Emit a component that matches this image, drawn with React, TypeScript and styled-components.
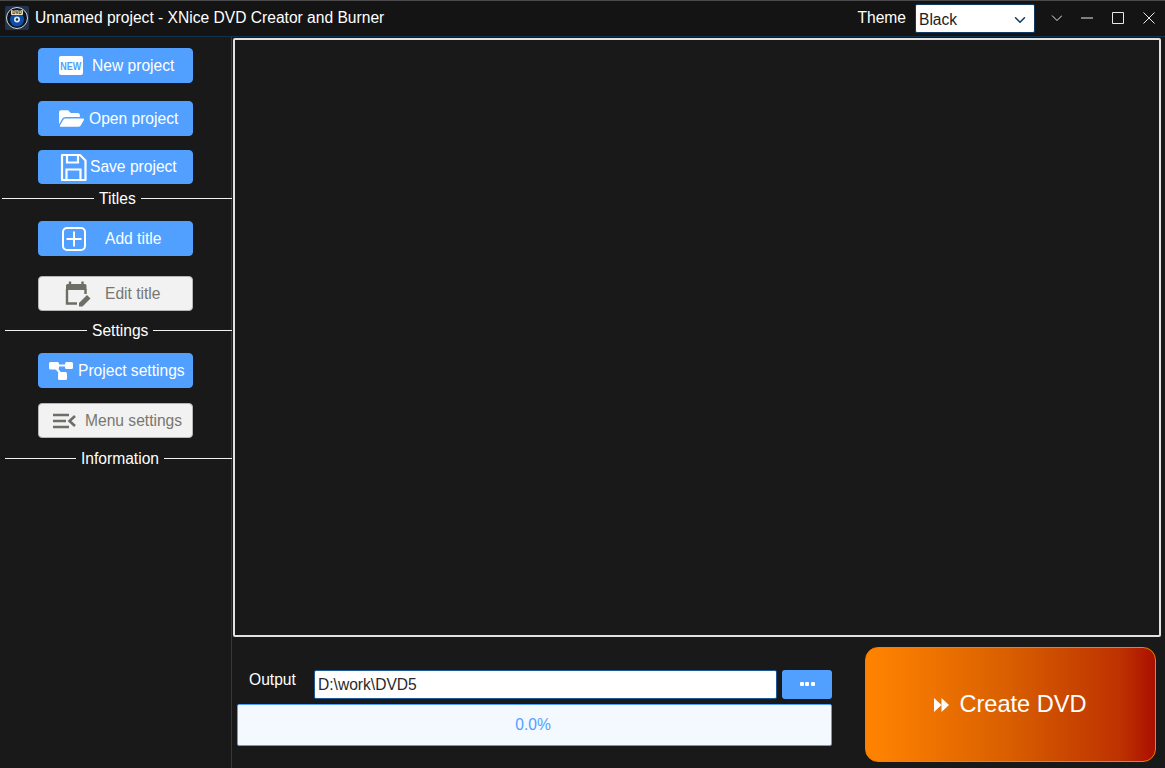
import * as React from 'react';
import styled, { createGlobalStyle } from 'styled-components';
import { ChevronDown } from 'lucide-react';
import { FaFolderOpen } from 'react-icons/fa';

const GlobalStyle = createGlobalStyle`
  html, body {
    margin: 0;
    padding: 0;
    background: #191919;
    font-family: "Liberation Sans", Arial, sans-serif;
  }
`;

const Window = styled.div`
  width: 1165px;
  height: 768px;
  display: flex;
  flex-direction: column;
  overflow: hidden;
  background: #191919;
  color: #fff;
  font-size: 15.6px;
`;

const TitleBar = styled.div`
  height: 37px;
  flex: none;
  box-sizing: border-box;
  display: flex;
  align-items: center;
  padding: 0 0 1px 5px;
  background: #141414;
  border-top: 1px solid #4a4a4a;
  border-bottom: 1px solid #12324c;
`;

const AppName = styled.span`
  margin-left: 6px;
  flex: 1;
`;

const ThemeLabel = styled.span`
  margin-right: 9px;
`;

const ThemeSelect = styled.div`
  width: 120px;
  height: 29px;
  margin-top: 1px;
  box-sizing: border-box;
  display: flex;
  align-items: center;
  justify-content: space-between;
  padding: 2px 5px 0 3px;
  background: #fff;
  color: #1d1d1d;
  border: 1px solid #0d3a63;
  border-radius: 2px;
`;

const WindowButtons = styled.div`
  display: flex;
  align-items: center;
  gap: 19px;
  margin-left: 15px;
  margin-right: 10px;
`;

const Body = styled.div`
  flex: 1;
  display: flex;
  min-height: 0;
`;

const Sidebar = styled.aside`
  width: 232px;
  flex: none;
  box-sizing: border-box;
  border-right: 1px solid #2e3a44;
  display: flex;
  flex-direction: column;
`;

const ActionButton = styled.div<{ $top: number; $left: number; $gap: number; $height?: number; $off?: boolean }>`
  width: 155px;
  height: ${(p) => p.$height ?? 35}px;
  flex: none;
  box-sizing: border-box;
  margin: ${(p) => p.$top}px 0 0 38px;
  padding-left: ${(p) => p.$left}px;
  display: flex;
  align-items: center;
  gap: ${(p) => p.$gap}px;
  border-radius: 4px;
  background: ${(p) => (p.$off ? '#f2f2f2' : '#519fff')};
  color: ${(p) => (p.$off ? '#77776f' : '#fff')};
  border: 1px solid ${(p) => (p.$off ? '#b5b5b5' : '#519fff')};
`;

const NewBadge = styled.span`
  width: 24px;
  height: 19px;
  border-radius: 2px;
  background: #fff;
  color: #519fff;
  display: flex;
  align-items: center;
  justify-content: center;
`;

const NewLabel = styled.span`
  font-size: 11px;
  font-weight: 700;
  transform: scaleX(0.82);
`;

const Section = styled.div<{ $top: number; $inset: number }>`
  height: 18px;
  flex: none;
  margin: ${(p) => p.$top}px -1px 0 ${(p) => p.$inset}px;
  display: flex;
  align-items: center;
  gap: 5px;
  line-height: 18px;
`;

const SectionLabel = styled.span`
  padding-top: 2px;
`;

const SectionLine = styled.span<{ $width?: number }>`
  height: 1px;
  background: #f2f2f2;
  flex: ${(p) => (p.$width ? 'none' : 1)};
  width: ${(p) => (p.$width ? `${p.$width}px` : 'auto')};
`;

const Content = styled.main`
  flex: 1;
  min-width: 0;
  display: flex;
  flex-direction: column;
`;

const Preview = styled.div`
  height: 599px;
  flex: none;
  box-sizing: border-box;
  margin: 1px 4px 0 1px;
  border: 2px solid #e2e2e2;
  border-radius: 2px;
  background: #191919;
`;

const Footer = styled.div`
  flex: 1;
  display: flex;
  align-items: flex-start;
  padding: 10px 9px 0 5px;
`;

const OutputColumn = styled.div`
  width: 595px;
  flex: none;
  padding-top: 23px;
  display: flex;
  flex-direction: column;
  gap: 5px;
`;

const OutputRow = styled.div`
  height: 29px;
  display: flex;
  align-items: stretch;
`;

const OutputLabel = styled.span`
  width: 77px;
  flex: none;
  padding-left: 12px;
  box-sizing: border-box;
  line-height: 19px;
`;

const PathField = styled.div`
  flex: 1;
  box-sizing: border-box;
  display: flex;
  align-items: center;
  padding: 1px 0 0 3px;
  background: #fff;
  color: #2a2a2a;
  border: 1px solid #1c5a96;
  border-radius: 2px;
`;

const BrowseButton = styled.div`
  width: 50px;
  margin-left: 5px;
  padding-bottom: 2px;
  box-sizing: border-box;
  flex: none;
  border-radius: 3px;
  background: #519fff;
  display: flex;
  align-items: center;
  justify-content: center;
  gap: 1.5px;
`;

const Dot = styled.i`
  width: 4px;
  height: 4px;
  background: #fff;
  border-radius: 1px;
`;

const Progress = styled.div`
  height: 42px;
  box-sizing: border-box;
  display: flex;
  align-items: center;
  justify-content: center;
  padding-right: 3px;
  background: #f4f8ff;
  color: #519fff;
  border: 1px solid #519fff;
  border-radius: 2px;
`;

const CreateButton = styled.div`
  width: 291px;
  height: 115px;
  margin-left: 33px;
  flex: none;
  box-sizing: border-box;
  display: flex;
  align-items: center;
  justify-content: center;
  gap: 10px;
  font-size: 23.6px;
  border-radius: 13px;
  border: 1px solid #f57f00;
  background: linear-gradient(90deg, #ff8300 0%, #fd8100 5%, #d85e00 50%, #bd3200 88%, #ab0f00 100%);
`;

const DiscLogo = () => (
  <svg width="24" height="24" viewBox="0 0 24 24">
    <rect width="24" height="24" rx="2" fill="#24334a" />
    <circle cx="12" cy="12" r="10.500" fill="#0c1420" stroke="#cfd6de" strokeWidth="1" />
    <circle cx="12" cy="13.500" r="7" fill="#0d4fa8" />
    <circle cx="12" cy="13.500" r="3" fill="#dfe7f0" />
    <circle cx="12" cy="13.500" r="1.200" fill="#10233f" />
    <rect x="6" y="4" width="12" height="5" rx="1" fill="#e8e2c8" />
    <text x="12" y="8" textAnchor="middle" fontSize="4.500" fontWeight="700" fill="#1a1a1a" fontFamily="Liberation Sans, sans-serif">
      DVD
    </text>
  </svg>
);

const SaveIcon = () => (
  <svg width="27" height="29" viewBox="0 0 27 29" fill="none" stroke="#fff" strokeWidth="2.200">
    <path d="M2 2h18l5.500 5.500V27H2z" strokeLinejoin="round" />
    <path d="M7 2v7.500h11V2" />
    <path d="M6.500 27V16.500h14V27" />
  </svg>
);

const AddIcon = () => (
  <svg width="24" height="24" viewBox="0 0 24 24" fill="none" stroke="#fff" strokeWidth="2">
    <rect x="1" y="1" width="22" height="22" rx="4" />
    <path d="M4.500 12h15M12 4.500v15" />
  </svg>
);

const EditIcon = () => (
  <svg width="26" height="28" viewBox="0 0 26 28" fill="none">
    <path d="M1 8V5.500A1.500 1.500 0 0 1 2.500 4H20a1.500 1.500 0 0 1 1.500 1.500V10H1z" fill="#6e6e66" />
    <path d="M5 1.500v4M17.500 1.500v4" stroke="#6e6e66" strokeWidth="2.400" />
    <path d="M2 9v14.500h10M20.500 9v5" stroke="#6e6e66" strokeWidth="2.400" />
    <path d="M14 26.500v-3.500l8-8 3.500 3.500-8 8z" fill="#6e6e66" />
  </svg>
);

const TreeIcon = () => (
  <svg width="24" height="19" viewBox="0 0 24 19" fill="#fff">
    <rect x="0" y="1" width="10" height="7.500" rx="1.500" />
    <rect x="16" y="1" width="8" height="7" rx="1.500" />
    <rect x="9" y="11" width="9" height="8" rx="1.500" />
    <path d="M6 4.500h12M6 6l7 8" stroke="#fff" strokeWidth="2.200" />
  </svg>
);

const MenuIcon = () => (
  <svg width="23" height="16" viewBox="0 0 23 16" fill="none" stroke="#6e6e66" strokeWidth="2.600">
    <path d="M0 2h16M0 8h13M0 14h16" />
    <path d="M22 3l-5.500 5 5.500 5" />
  </svg>
);

const ForwardIcon = () => (
  <svg width="15" height="14" viewBox="0 0 15 14" fill="#fff">
    <path d="M0 0l7.500 7L0 14zM7.500 0L15 7l-7.500 7z" />
  </svg>
);

const WindowIcon = ({ d }: { d: string }) => (
  <svg width="12" height="12" viewBox="0 0 12 12" fill="none" stroke="#e8e8e8" strokeWidth="1">
    <path d={d} />
  </svg>
);

export default function App() {
  return (
    <Window>
      <GlobalStyle />
      <TitleBar>
        <DiscLogo />
        <AppName>Unnamed project - XNice DVD Creator and Burner</AppName>
        <ThemeLabel>Theme</ThemeLabel>
        <ThemeSelect>
          <span>Black</span>
          <ChevronDown size={18} color="#0d3a63" strokeWidth={2} />
        </ThemeSelect>
        <WindowButtons>
          <WindowIcon d="M2 3.500 7 8.500l5-5" />
          <WindowIcon d="M0 6h12" />
          <WindowIcon d="M.5 .5h11v11H.5z" />
          <WindowIcon d="M.5.500l11 11M11.500.500l-11 11" />
        </WindowButtons>
      </TitleBar>
      <Body>
        <Sidebar>
          <ActionButton $top={11} $left={20} $gap={9}>
            <NewBadge>
              <NewLabel>NEW</NewLabel>
            </NewBadge>
            New project
          </ActionButton>
          <ActionButton $top={18} $left={20} $gap={5}>
            <FaFolderOpen size={25} />
            Open project
          </ActionButton>
          <ActionButton $top={14} $left={21} $gap={3} $height={34}>
            <SaveIcon />
            Save project
          </ActionButton>
          <Section $top={5} $inset={2}>
            <SectionLine $width={92} />
            <SectionLabel>Titles</SectionLabel>
            <SectionLine />
          </Section>
          <ActionButton $top={14} $left={23} $gap={19}>
            <AddIcon />
            Add title
          </ActionButton>
          <ActionButton $top={20} $left={26} $gap={14} $off>
            <EditIcon />
            Edit title
          </ActionButton>
          <Section $top={10} $inset={5}>
            <SectionLine $width={82} />
            <SectionLabel>Settings</SectionLabel>
            <SectionLine />
          </Section>
          <ActionButton $top={14} $left={10} $gap={5}>
            <TreeIcon />
            Project settings
          </ActionButton>
          <ActionButton $top={15} $left={14} $gap={9} $off>
            <MenuIcon />
            Menu settings
          </ActionButton>
          <Section $top={11} $inset={5}>
            <SectionLine $width={71} />
            <SectionLabel>Information</SectionLabel>
            <SectionLine />
          </Section>
        </Sidebar>
        <Content>
          <Preview />
          <Footer>
            <OutputColumn>
              <OutputRow>
                <OutputLabel>Output</OutputLabel>
                <PathField>D:\work\DVD5</PathField>
                <BrowseButton>
                  <Dot />
                  <Dot />
                  <Dot />
                </BrowseButton>
              </OutputRow>
              <Progress>0.0%</Progress>
            </OutputColumn>
            <CreateButton>
              <ForwardIcon />
              Create DVD
            </CreateButton>
          </Footer>
        </Content>
      </Body>
    </Window>
  );
}
